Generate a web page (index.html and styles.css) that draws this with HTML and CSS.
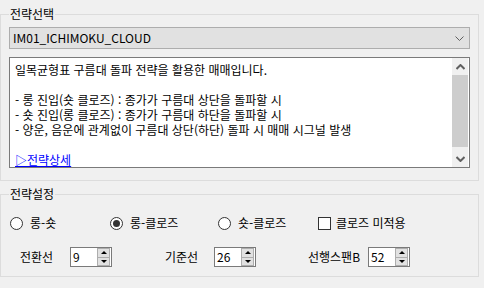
FILE: index.html
```html
<!DOCTYPE html>
<html lang="ko">
<head>
<meta charset="utf-8">
<link rel="stylesheet" href="styles.css">
</head>
<body>
<fieldset class="group group-select">
  <legend class="legend">전략선택</legend>
  <div class="combo">
    <span class="combo-text">IM01_ICHIMOKU_CLOUD</span>
    <svg class="combo-arrow" width="9" height="5" viewBox="0 0 9 5"><path d="M0.5 0.5 L4.5 4.5 L8.5 0.5" fill="none" stroke="#606060" stroke-width="1"/></svg>
  </div>
  <div class="memo">
    <div class="memo-text">
      <div class="line">일목균형표 구름대 돌파 전략을 활용한 매매입니다.</div>
      <div class="line">&nbsp;</div>
      <div class="line">- 롱 진입(숏 클로즈) : 종가가 구름대 상단을 돌파할 시</div>
      <div class="line">- 숏 진입(롱 클로즈) : 종가가 구름대 하단을 돌파할 시</div>
      <div class="line">- 양운, 음운에 관계없이 구름대 상단(하단) 돌파 시 매매 시그널 발생</div>
      <div class="line">&nbsp;</div>
      <div class="line"><a class="link" href="#">▷전략상세</a></div>
    </div>
    <div class="vscroll">
      <div class="sb-btn">
        <svg width="9" height="6" viewBox="0 0 9 6"><path d="M0.5 5 L4.5 1 L8.5 5" fill="none" stroke="#606060" stroke-width="2"/></svg>
      </div>
      <div class="sb-thumb"></div>
      <div class="sb-track"></div>
      <div class="sb-btn">
        <svg width="9" height="6" viewBox="0 0 9 6"><path d="M0.5 1 L4.5 5 L8.5 1" fill="none" stroke="#606060" stroke-width="2"/></svg>
      </div>
    </div>
  </div>
</fieldset>

<fieldset class="group group-setting">
  <legend class="legend">전략설정</legend>
  <div class="options">
    <label class="opt opt-1"><span class="radio"></span><span>롱-숏</span></label>
    <label class="opt opt-2"><span class="radio checked"></span><span>롱-클로즈</span></label>
    <label class="opt opt-3"><span class="radio"></span><span>숏-클로즈</span></label>
    <label class="opt opt-4"><span class="check"></span><span>클로즈 미적용</span></label>
  </div>
  <div class="params">
    <div class="param p1"><span class="plabel">전환선</span><div class="num"><span class="num-val">9</span><div class="spin"><div class="spin-up"><i class="tri-up"></i></div><div class="spin-down"><i class="tri-down"></i></div></div></div></div>
    <div class="param p2"><span class="plabel">기준선</span><div class="num"><span class="num-val">26</span><div class="spin"><div class="spin-up"><i class="tri-up"></i></div><div class="spin-down"><i class="tri-down"></i></div></div></div></div>
    <div class="param p3"><span class="plabel">선행스팬B</span><div class="num"><span class="num-val">52</span><div class="spin"><div class="spin-up"><i class="tri-up"></i></div><div class="spin-down"><i class="tri-down"></i></div></div></div></div>
  </div>
</fieldset>
</body>
</html>
```

FILE: styles.css
```css
html, body {
  margin: 0;
  padding: 0;
  background: #f0f0f0;
}
body {
  width: 484px;
  height: 288px;
  overflow: hidden;
  font-family: "Noto Sans CJK KR", "Noto Sans", sans-serif;
  font-size: 12px;
  color: #000;
}
.group {
  margin: 0;
  border: 1px solid #dcdcdc;
  width: 479px;
  box-sizing: border-box;
  min-width: 0;
}
.legend {
  padding: 0 1px;
  margin-left: 0;
  line-height: 16px;
  height: 16px;
  font-size: 12px;
}
.group-select {
  margin-top: 6px;
  padding: 5px 8px 12px 8px;
  height: 175px;
}
.group-setting {
  margin-top: 5px;
  padding: 4px 8px 0 8px;
  height: 91px;
}
.combo {
  height: 22px;
  box-sizing: border-box;
  border: 1px solid #adadad;
  background: #e1e1e1;
  display: flex;
  align-items: center;
  justify-content: space-between;
  padding: 0 5px 0 3px;
}
.combo-text {
  line-height: 20px;
}
.combo-arrow {
  display: block;
  margin-top: 1px;
}
.memo {
  margin-top: 8px;
  height: 111px;
  box-sizing: border-box;
  border: 1px solid #7a7a7a;
  background: #fff;
  display: flex;
}
.memo-text {
  flex: 1;
  padding: 4px 5px 0 5px;
  overflow: hidden;
}
.line {
  line-height: 15px;
  height: 15px;
  white-space: nowrap;
}
.link {
  color: #0000ff;
  text-decoration: underline;
}
.vscroll {
  width: 16px;
  margin-right: 1px;
  background: #f0f0f0;
  display: flex;
  flex-direction: column;
}
.sb-btn {
  height: 17px;
  display: flex;
  align-items: center;
  justify-content: center;
}
.sb-thumb {
  height: 72px;
  background: #cdcdcd;
}
.sb-track {
  flex: 1;
}
.options {
  display: flex;
  align-items: center;
  height: 20px;
  margin-top: 7px;
  padding-left: 1px;
}
.opt {
  display: flex;
  align-items: center;
  line-height: 16px;
}
.opt-1 { width: 100px; }
.opt-2 { width: 108px; }
.opt-3 { width: 100px; }
.radio {
  width: 13px;
  height: 13px;
  box-sizing: border-box;
  border: 1px solid #333;
  border-radius: 50%;
  background: #fff;
  margin-right: 7px;
  display: flex;
  align-items: center;
  justify-content: center;
}
.radio.checked::after {
  content: "";
  width: 7px;
  height: 7px;
  border-radius: 50%;
  background: #333;
}
.check {
  width: 13px;
  height: 13px;
  box-sizing: border-box;
  border: 1px solid #333;
  background: #fff;
  margin-right: 5px;
}
.params {
  display: flex;
  align-items: center;
  margin-top: 14px;
}
.param {
  display: flex;
  align-items: center;
}
.p1 { margin-left: 11px; }
.p2 { margin-left: 53px; }
.p3 { margin-left: 52px; }
.p1 .plabel { width: 50px; }
.p2 .plabel { width: 49px; }
.p3 .plabel { width: 60px; }
.plabel {
  line-height: 16px;
}
.num {
  width: 42px;
  height: 20px;
  box-sizing: border-box;
  border: 1px solid #7a7a7a;
  background: #fff;
  display: flex;
  align-items: center;
  justify-content: space-between;
  padding: 0 1px 0 2px;
}
.num-val {
  line-height: 16px;
}
.spin {
  width: 13px;
  height: 18px;
  box-sizing: border-box;
  border: 1px solid #adadad;
  background: #e1e1e1;
  display: flex;
  flex-direction: column;
}
.spin-up, .spin-down {
  flex: 1;
  display: flex;
  align-items: center;
  justify-content: center;
}
.spin-up {
  border-bottom: 1px solid #adadad;
}
.tri-up {
  width: 0;
  height: 0;
  border-left: 3px solid transparent;
  border-right: 3px solid transparent;
  border-bottom: 3px solid #000;
}
.tri-down {
  width: 0;
  height: 0;
  border-left: 3px solid transparent;
  border-right: 3px solid transparent;
  border-top: 3px solid #000;
}
```
